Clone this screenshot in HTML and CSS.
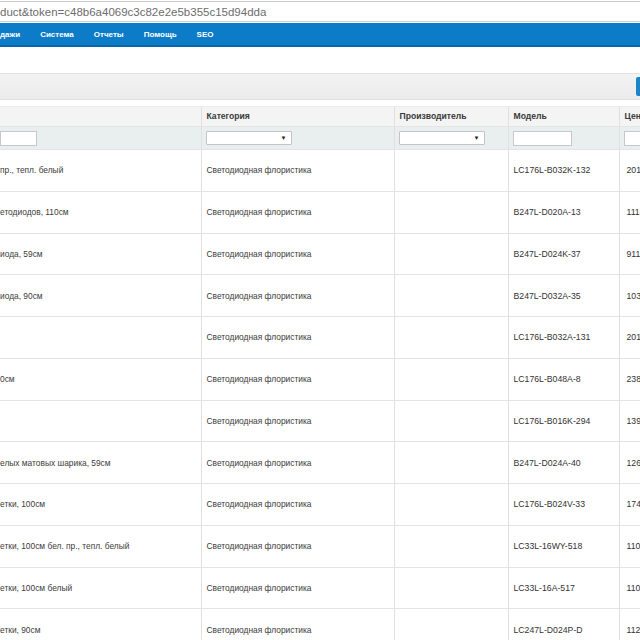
FILE: index.html
```html
<!DOCTYPE html>
<html lang="ru">
<head>
<meta charset="utf-8">
<title>Товары</title>
<link rel="stylesheet" href="styles.css">
</head>
<body>
<div class="addr"><span class="url">duct&amp;token=c48b6a4069c3c82e2e5b355c15d94dda</span></div>
<nav class="nav">
  <span class="nav-item">дажи</span>
  <span class="nav-item">Система</span>
  <span class="nav-item">Отчеты</span>
  <span class="nav-item">Помощь</span>
  <span class="nav-item">SEO</span>
</nav>
<div class="spacer"></div>
<div class="toolbar"><span class="tool-btn"></span></div>
<div class="table-wrap">
<table class="grid">
  <colgroup>
    <col class="c1"><col class="c2"><col class="c3"><col class="c4"><col class="c5">
  </colgroup>
  <thead>
    <tr class="head">
      <th></th><th>Категория</th><th>Производитель</th><th>Модель</th><th>Цена</th>
    </tr>
    <tr class="filter">
      <td><input class="inp inp-name" type="text"></td>
      <td><span class="sel sel-cat"><span class="arrow">▼</span></span></td>
      <td><span class="sel sel-man"><span class="arrow">▼</span></span></td>
      <td><input class="inp inp-model" type="text"></td>
      <td><input class="inp inp-price" type="text"></td>
    </tr>
  </thead>
  <tbody>
    <tr><td>пр., тепл. белый</td><td>Светодиодная флористика</td><td></td><td>LC176L-B032K-132</td><td>2010</td></tr>
    <tr><td>етодиодов, 110см</td><td>Светодиодная флористика</td><td></td><td>B247L-D020A-13</td><td>1110</td></tr>
    <tr><td>иода, 59см</td><td>Светодиодная флористика</td><td></td><td>B247L-D024K-37</td><td>9110</td></tr>
    <tr><td>иода, 90см</td><td>Светодиодная флористика</td><td></td><td>B247L-D032A-35</td><td>1030</td></tr>
    <tr><td></td><td>Светодиодная флористика</td><td></td><td>LC176L-B032A-131</td><td>2010</td></tr>
    <tr><td>0см</td><td>Светодиодная флористика</td><td></td><td>LC176L-B048A-8</td><td>2380</td></tr>
    <tr><td></td><td>Светодиодная флористика</td><td></td><td>LC176L-B016K-294</td><td>1390</td></tr>
    <tr><td>елых матовых шарика, 59см</td><td>Светодиодная флористика</td><td></td><td>B247L-D024A-40</td><td>1260</td></tr>
    <tr><td>етки, 100см</td><td>Светодиодная флористика</td><td></td><td>LC176L-B024V-33</td><td>1740</td></tr>
    <tr><td>етки, 100см бел. пр., тепл. белый</td><td>Светодиодная флористика</td><td></td><td>LC33L-16WY-518</td><td>1100</td></tr>
    <tr><td>етки, 100см белый</td><td>Светодиодная флористика</td><td></td><td>LC33L-16A-517</td><td>1100</td></tr>
    <tr><td>етки, 90см</td><td>Светодиодная флористика</td><td></td><td>LC247L-D024P-D</td><td>1120</td></tr>
  </tbody>
</table>
</div>
</body>
</html>
```
FILE: styles.css
```css
html, body {
  margin: 0;
  padding: 0;
  background: #ffffff;
  overflow: hidden;
  width: 640px;
  height: 640px;
}
body {
  font-family: "Liberation Sans", Arial, sans-serif;
  color: #333333;
}
.addr {
  height: 19px;
  border-top: 1px solid #c8c8c8;
  border-bottom: 1px solid #cfcfcf;
  margin-top: 1px;
  display: flex;
  align-items: center;
  background: #ffffff;
}
.url {
  font-family: "Liberation Sans", Arial, sans-serif;
  font-size: 11.5px;
  color: #6d6d6d;
}
.nav {
  height: 22px;
  margin-top: 1px;
  background: #0c7bc8;
  border-bottom: 2px solid #0a66a6;
  display: flex;
  align-items: center;
  gap: 20px;
}
.nav-item {
  color: #ffffff;
  font-size: 8px;
  font-weight: bold;
}
.spacer {
  height: 26px;
}
.toolbar {
  height: 25px;
  border-top: 1px solid #e2e2e2;
  border-bottom: 1px solid #e2e2e2;
  background: linear-gradient(#f2f2f2, #ececec);
  display: flex;
  align-items: center;
  justify-content: flex-end;
}
.tool-btn {
  width: 30px;
  height: 19px;
  background: #1a86c8;
  border-radius: 2px;
  margin-right: -26px;
}
.table-wrap {
  margin-top: 6px;
  width: 640px;
  overflow: hidden;
}
.grid {
  table-layout: fixed;
  border-collapse: collapse;
  width: 719px;
  font-size: 8.4px;
}
.c1 { width: 201px; }
.c2 { width: 193px; }
.c3 { width: 114px; }
.c4 { width: 111px; }
.c5 { width: 100px; }
.grid th, .grid td {
  border-left: 1px solid #e0e0e0;
  border-bottom: 1px solid #e4e4e4;
  padding: 0 0 0 5px;
  text-align: left;
  white-space: nowrap;
  overflow: hidden;
}
.grid th:first-child, .grid td:first-child {
  border-left: none;
  padding-left: 0;
}
.head th {
  height: 18px;
  background: #f4f4f4;
  font-weight: bold;
  font-size: 8.6px;
  color: #3a3a3a;
  border-top: 1px solid #ececec;
  padding-bottom: 1px;
}
.filter td {
  height: 22px;
  background: #e9efef;
  padding-left: 4px;
}
.filter td:first-child {
  padding-left: 0;
}
.inp {
  display: block;
  box-sizing: border-box;
  height: 15px;
  border: 1px solid #c8c8c8;
  background: #ffffff;
  margin: 0;
  padding: 0;
}
.inp-name { width: 37px; }
.inp-model { width: 59px; }
.inp-price { width: 40px; }
.sel {
  display: flex;
  box-sizing: border-box;
  justify-content: flex-end;
  align-items: center;
  width: 86px;
  height: 14px;
  border: 1px solid #c4c4c4;
  background: #ffffff;
  border-radius: 1px;
}
.arrow {
  font-size: 6px;
  color: #222222;
  margin-right: 4px;
}
tbody td {
  height: 40.75px;
  color: #3c3c3c;
}
tbody td:nth-child(4) {
  padding-left: 5px;
  font-size: 8.7px;
  color: #333333;
}
tbody td:nth-child(5) {
  padding-left: 7px;
  font-size: 8.7px;
  color: #333333;
}
```
